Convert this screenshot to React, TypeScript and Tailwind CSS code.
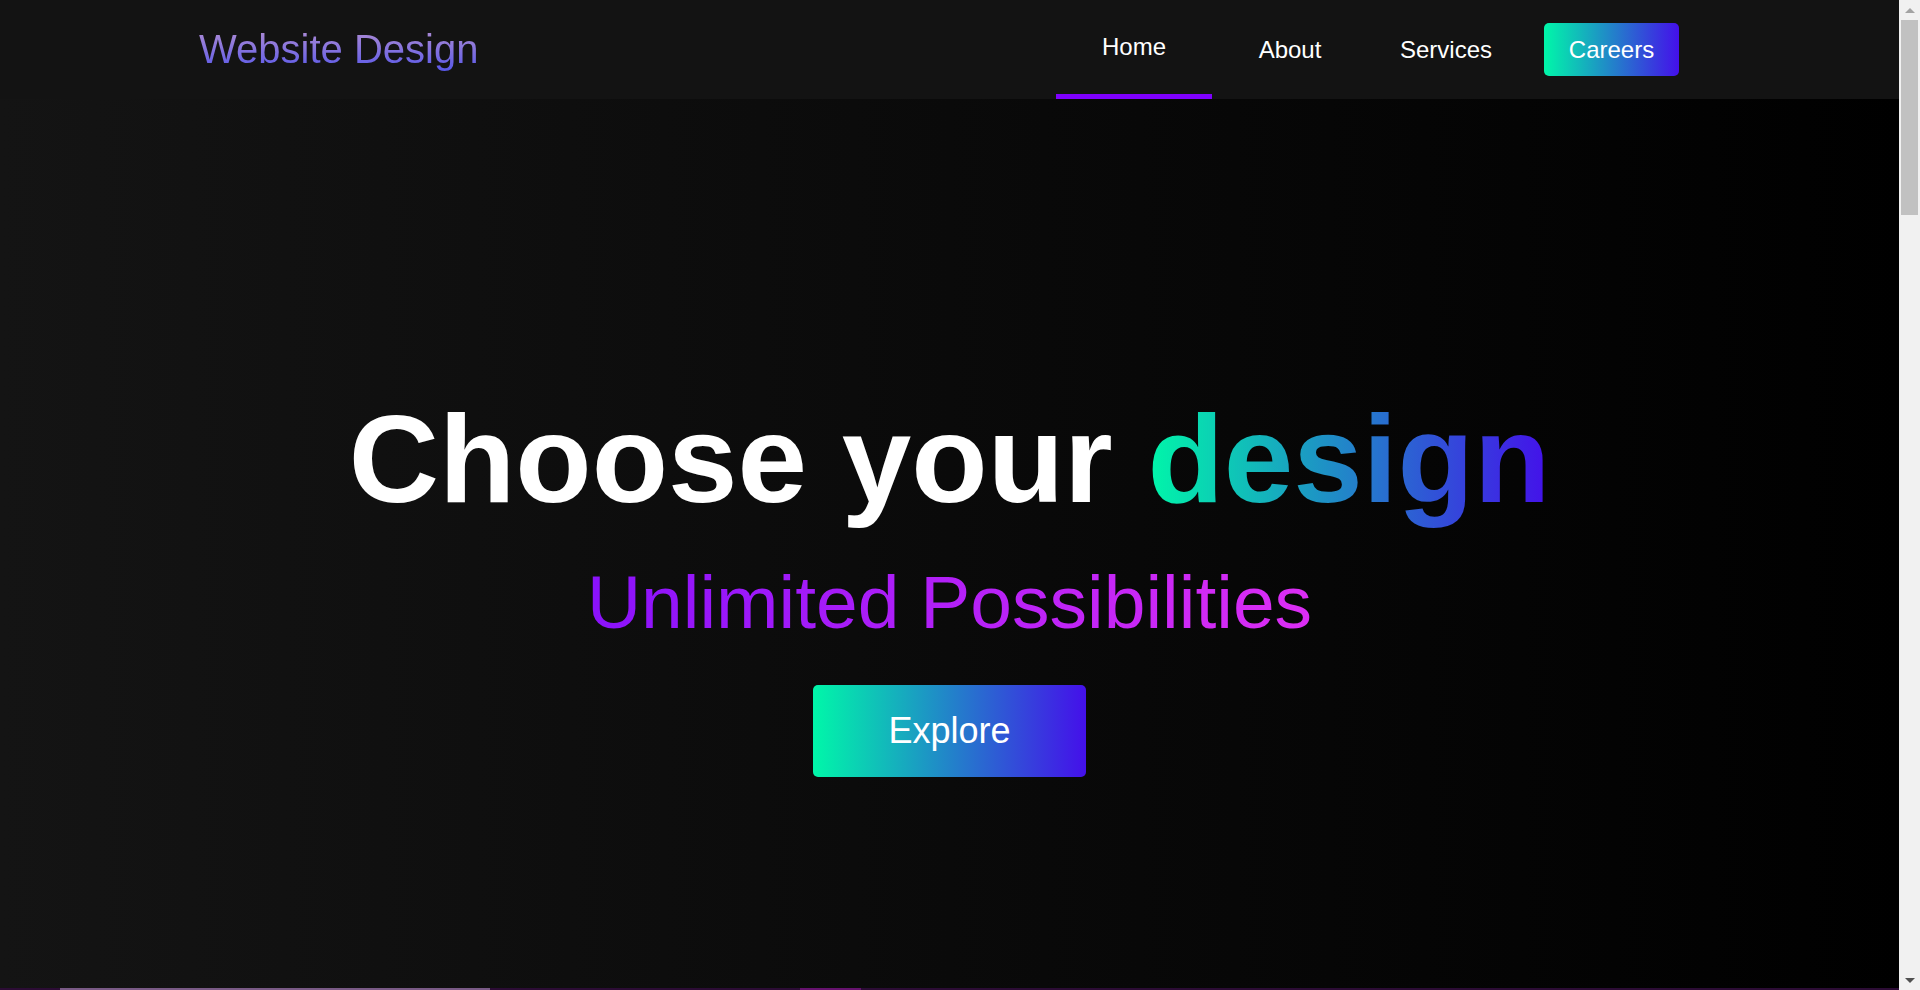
import { useState } from "react";

const links = ["Home", "About", "Services"];

function Header() {
  const [active, setActive] = useState("Home");

  return (
    <header className="flex h-[99px] items-center justify-between bg-[#131313] pl-[199px] pr-[220px]">
      <a
        href="#"
        className="bg-linear-to-b/srgb from-[#b38fd2] to-[#5656ea] bg-clip-text text-[40px] leading-[normal] text-transparent"
      >
        Website Design
      </a>

      <nav className="flex items-center">
        {links.map((link) => (
          <a
            key={link}
            href="#"
            onClick={() => setActive(link)}
            className={`flex h-[99px] w-[156px] items-center justify-center text-[24px] text-white ${
              active === link ? "border-b-[5px] border-[#7f00ff]" : ""
            }`}
          >
            {link}
          </a>
        ))}
        <button className="ml-[20px] h-[53px] w-[135px] rounded-[5px] bg-linear-to-r/srgb from-[#00f7a9] to-[#4410ea] text-[24px] text-white">
          Careers
        </button>
      </nav>
    </header>
  );
}

function Hero() {
  return (
    <section className="flex h-[889px] flex-col items-center bg-linear-to-r/srgb from-[#141414] to-black pt-[288px]">
      <h1 className="text-[125px] font-bold leading-[normal] text-white">
        Choose your{" "}
        <span className="bg-linear-to-r/srgb from-[#00f7a9] to-[#4410ea] bg-clip-text text-transparent">
          design
        </span>
      </h1>
      <h2 className="mt-[29px] bg-linear-to-r/srgb from-[#8a12fb] to-[#dc2ef4] bg-clip-text text-[75px] leading-[normal] text-transparent">
        Unlimited Possibilities
      </h2>
      <button className="mt-[40px] h-[92px] w-[273px] rounded-[5px] bg-linear-to-r/srgb from-[#00f7a9] to-[#4410ea] text-[36px] text-white">
        Explore
      </button>
    </section>
  );
}

function Showcase() {
  // only the very top of this section is visible on first load
  return (
    <section className="h-[3862px] bg-[#2c0c35]">
      <div className="flex items-start">
        <div className="ml-[60px] h-[320px] w-[430px] border-t-2 border-[#7a5a86] bg-[#3a1a44]" />
        <div className="ml-[310px] h-[40px] w-[61px] bg-[#66126e]" />
      </div>
    </section>
  );
}

// the window's classic scrollbar, as seen in the screenshot
function ScrollBar() {
  return (
    <aside className="sticky top-0 flex h-[990px] w-[21px] shrink-0 flex-col items-center bg-[#f1f1f1]">
      <div className="flex h-[20px] items-center justify-center">
        <span className="h-0 w-0 border-x-[5px] border-b-[5px] border-x-transparent border-b-[#a3a3a3]" />
      </div>
      <div className="h-[195px] w-[17px] bg-[#c1c1c1]" />
      <div className="flex-1" />
      <div className="flex h-[20px] items-center justify-center">
        <span className="h-0 w-0 border-x-[5px] border-t-[5px] border-x-transparent border-t-[#505050]" />
      </div>
    </aside>
  );
}

export default function App() {
  return (
    <div className="flex items-start font-['Liberation_Sans',Arial,sans-serif]">
      <main className="w-[1899px] shrink-0">
        <Header />
        <Hero />
        <Showcase />
      </main>
      <ScrollBar />
    </div>
  );
}
